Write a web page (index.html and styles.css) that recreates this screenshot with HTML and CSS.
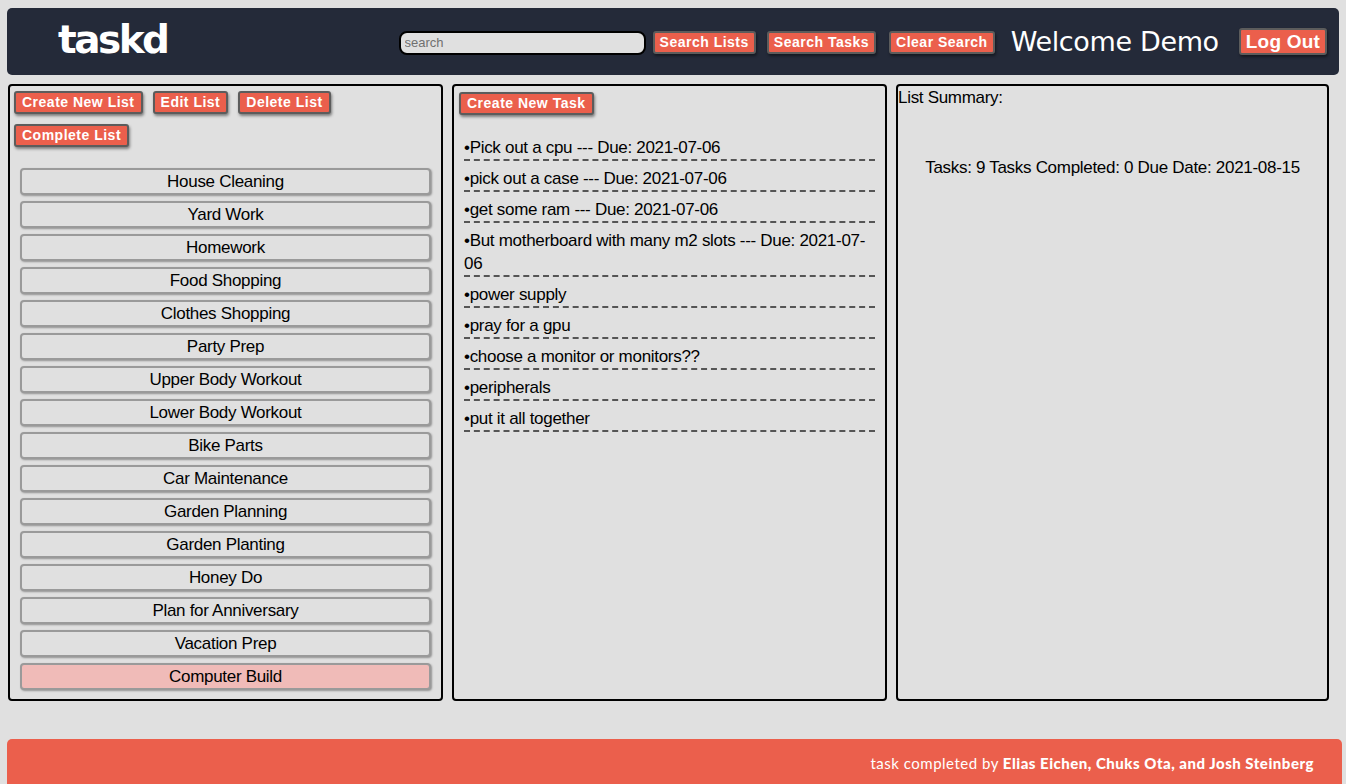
FILE: index.html
```html
<!DOCTYPE html>
<html>
<head>
<meta charset="utf-8">
<title>taskd</title>
<link rel="stylesheet" href="styles.css">
</head>
<body>
<header class="topbar">
  <div class="logo">taskd</div>
  <div class="top-right">
    <input class="search" type="text" placeholder="search">
    <button class="btn">Search Lists</button>
    <button class="btn">Search Tasks</button>
    <button class="btn">Clear Search</button>
    <span class="welcome">Welcome Demo</span>
    <button class="btn btn-lg">Log Out</button>
  </div>
</header>
<main class="panels">
  <section class="panel lists-panel">
    <div class="actions">
      <button class="btn">Create New List</button>
      <button class="btn">Edit List</button>
      <button class="btn">Delete List</button>
      <button class="btn">Complete List</button>
    </div>
    <div class="lists">
      <div class="list-item">House Cleaning</div>
      <div class="list-item">Yard Work</div>
      <div class="list-item">Homework</div>
      <div class="list-item">Food Shopping</div>
      <div class="list-item">Clothes Shopping</div>
      <div class="list-item">Party Prep</div>
      <div class="list-item">Upper Body Workout</div>
      <div class="list-item">Lower Body Workout</div>
      <div class="list-item">Bike Parts</div>
      <div class="list-item">Car Maintenance</div>
      <div class="list-item">Garden Planning</div>
      <div class="list-item">Garden Planting</div>
      <div class="list-item">Honey Do</div>
      <div class="list-item">Plan for Anniversary</div>
      <div class="list-item">Vacation Prep</div>
      <div class="list-item selected">Computer Build</div>
    </div>
  </section>
  <section class="panel tasks-panel">
    <div class="actions">
      <button class="btn">Create New Task</button>
    </div>
    <ul class="tasks">
      <li>•Pick out a cpu --- Due: 2021-07-06</li>
      <li>•pick out a case --- Due: 2021-07-06</li>
      <li>•get some ram --- Due: 2021-07-06</li>
      <li>•But motherboard with many m2 slots --- Due: 2021-07-06</li>
      <li>•power supply</li>
      <li>•pray for a gpu</li>
      <li>•choose a monitor or monitors??</li>
      <li>•peripherals</li>
      <li>•put it all together</li>
    </ul>
  </section>
  <section class="panel summary-panel">
    <div class="summary-title">List Summary:</div>
    <div class="summary-body">Tasks: 9 Tasks Completed: 0 Due Date: 2021-08-15</div>
  </section>
</main>
<footer class="footer">
  <span class="credit">task completed by <b>Elias Eichen, Chuks Ota, and Josh Steinberg</b></span>
</footer>
</body>
</html>
```

FILE: styles.css
```css
* { box-sizing: border-box; }
html, body { height: 100%; }
body {
  margin: 0;
  padding: 8px 7px 0 7px;
  background: #e0e0e0;
  font-family: "Liberation Sans", Arial, sans-serif;
  color: #000;
  overflow: hidden;
}
.topbar {
  height: 67px;
  background: #242a39;
  border-radius: 5px;
  display: flex;
  align-items: center;
  justify-content: space-between;
  padding: 0 12px 0 51px;
}
.logo {
  color: #fff;
  font-family: "DejaVu Sans", sans-serif;
  font-weight: bold;
  font-size: 39px;
  letter-spacing: -2.5px;
  margin-top: -4px;
}
.top-right {
  display: flex;
  align-items: center;
  margin-top: 2px;
}
.search {
  width: 247px;
  height: 24px;
  border: 2px solid #000;
  border-radius: 8px;
  background: #e0e0e0;
  font-family: "Liberation Sans", Arial, sans-serif;
  font-size: 13px;
  padding: 0 4px;
  margin-right: 7px;
  outline: none;
}
.search::placeholder { color: #707070; }
.btn {
  background: #eb5f4c;
  color: #fff;
  font-family: "Liberation Sans", Arial, sans-serif;
  font-weight: bold;
  font-size: 14px;
  letter-spacing: 0.5px;
  border: 2px solid #5c5c5c;
  border-radius: 3px;
  padding: 1px 6px;
  height: 23px;
  line-height: 17px;
  box-shadow: 1px 2px 3px rgba(0,0,0,0.45);
  cursor: pointer;
}
.top-right .btn { margin-right: 11px; padding: 1px 5px; }
.top-right .btn:nth-of-type(2) { margin-right: 13px; }
.top-right .btn:nth-of-type(3) { margin-right: 16px; }
.top-right .btn-lg {
  font-size: 19px;
  letter-spacing: 0.2px;
  height: 27px;
  line-height: 21px;
  padding: 0 5px;
  margin-top: -2px;
  margin-right: 0;
}
.welcome {
  color: #fff;
  font-family: "DejaVu Sans", sans-serif;
  font-size: 27px;
  margin-right: 20px;
  margin-top: -2px;
  letter-spacing: -0.35px;
}
.panels {
  display: grid;
  grid-template-columns: 435px 435px 433px;
  column-gap: 9px;
  margin-top: 9px;
  padding-left: 1px;
  height: 617px;
}
.panel {
  border: 2px solid #000;
  border-radius: 4px;
  background: #e0e0e0;
}
.lists-panel { padding: 5px 10px 0 4px; }
.actions {
  display: flex;
  flex-wrap: wrap;
  column-gap: 10px;
  row-gap: 10px;
}
.lists {
  display: flex;
  flex-direction: column;
  gap: 6px;
  margin-top: 21px;
  padding-left: 6px;
}
.list-item {
  height: 27px;
  border: 2px solid #9a9a9a;
  border-radius: 4px;
  background: #e0e0e0;
  box-shadow: 1px 1px 2px rgba(0,0,0,0.35);
  text-align: center;
  font-size: 17px;
  line-height: 23px;
  letter-spacing: -0.3px;
}
.list-item.selected { background: #f0bbb8; }
.tasks-panel { padding: 6px 10px 0 5px; }
.tasks {
  list-style: none;
  margin: 15px 0 0 5px;
  padding: 0;
}
.tasks li {
  font-size: 17px;
  line-height: 23px;
  letter-spacing: -0.3px;
  border-bottom: 2px dashed #555;
  padding-top: 6px;
}
.summary-panel { padding: 2px 0 0 0; }
.summary-title {
  font-size: 17px;
  line-height: 20px;
  letter-spacing: -0.3px;
}
.summary-body {
  font-size: 17px;
  text-align: center;
  margin-top: 50px;
  letter-spacing: -0.3px;
}
.footer {
  margin-top: 38px;
  height: 60px;
  background: #eb5f4c;
  border-radius: 5px 5px 0 0;
  margin-right: -3px;
  display: flex;
  justify-content: flex-end;
  padding: 15px 28px 0 0;
}
.credit {
  color: #fff;
  font-family: Lato, sans-serif;
  font-size: 15px;
  letter-spacing: 0.5px;
}
.credit b { font-weight: 900; }
```
